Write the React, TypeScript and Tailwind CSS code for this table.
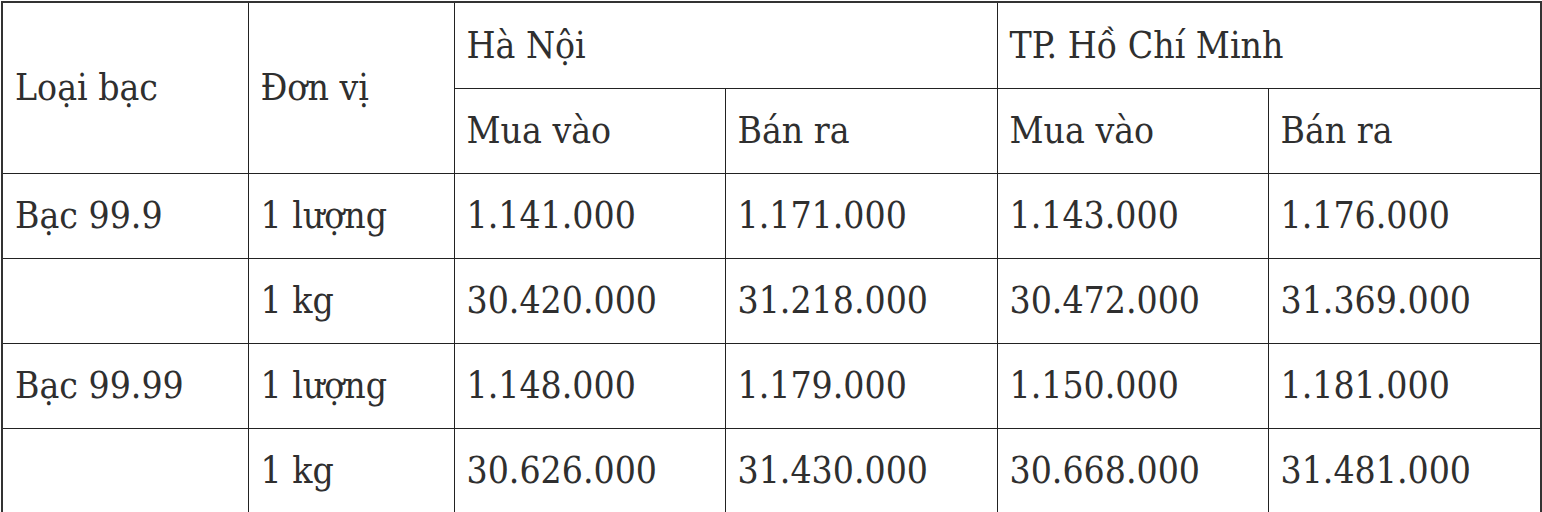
import React from 'react'

const rows = [
  { type: 'Bạc 99.9', unit: '1 lượng', values: ['1.141.000', '1.171.000', '1.143.000', '1.176.000'] },
  { type: '', unit: '1 kg', values: ['30.420.000', '31.218.000', '30.472.000', '31.369.000'] },
  { type: 'Bạc 99.99', unit: '1 lượng', values: ['1.148.000', '1.179.000', '1.150.000', '1.181.000'] },
  { type: '', unit: '1 kg', values: ['30.626.000', '31.430.000', '30.668.000', '31.481.000'] },
]

const cell = 'border border-[#222] pl-3 pr-2 align-middle text-left font-normal'

export default function App() {
  return (
    <div className="bg-white w-[1542px] h-[512px] overflow-hidden pl-px pt-px">
      <table className="w-[1541px] table-fixed border-collapse border-2 border-[#333] text-[37px] leading-none text-[#2f2f2f] font-['DejaVu_Serif_Condensed','DejaVu_Serif',serif] font-stretch-condensed">
        <colgroup>
          <col className="w-[246px]" />
          <col className="w-[206px]" />
          <col className="w-[271px]" />
          <col className="w-[272px]" />
          <col className="w-[271px]" />
          <col />
        </colgroup>
        <thead>
          <tr className="h-[86px]">
            <th rowSpan={2} className={cell}>Loại bạc</th>
            <th rowSpan={2} className={cell}>Đơn vị</th>
            <th colSpan={2} className={cell}>Hà Nội</th>
            <th colSpan={2} className={cell}>TP. Hồ Chí Minh</th>
          </tr>
          <tr className="h-[85px]">
            <th className={cell}>Mua vào</th>
            <th className={cell}>Bán ra</th>
            <th className={cell}>Mua vào</th>
            <th className={cell}>Bán ra</th>
          </tr>
        </thead>
        <tbody>
          {rows.map((r, i) => (
            <tr key={i} className="h-[85px]">
              <td className={cell}>{r.type}</td>
              <td className={cell}>{r.unit}</td>
              {r.values.map((v, j) => (
                <td key={j} className={cell}>{v}</td>
              ))}
            </tr>
          ))}
        </tbody>
      </table>
    </div>
  )
}
